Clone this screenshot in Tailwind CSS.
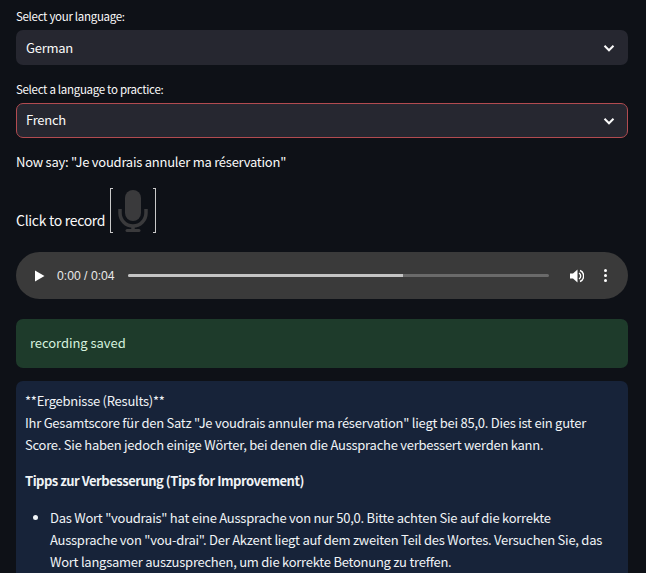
<!DOCTYPE html>
<html lang="en">
<head>
    <meta charset="UTF-8">
    <meta name="viewport" content="width=device-width, initial-scale=1.0">
    <title>Language Practice</title>
    <script src="https://cdn.jsdelivr.net/npm/@tailwindcss/browser@4"></script>
</head>
<body class="bg-[#0e1117] text-[#fafafa] font-['Noto_Sans_CJK_JP',sans-serif] text-[13px] tracking-[-0.25px] leading-[22px] h-[573px] overflow-hidden">
    <div class="pl-4 pr-[18px] pt-[7px]">
        <label class="block text-[11.5px] tracking-[-0.3px] leading-[18px] h-[23px]">Select your language:</label>
        <div class="h-[35px] rounded-[7px] bg-[#262730] flex items-center justify-between pl-[10px] pr-[12px]">
            <span>German</span>
            <svg class="w-[14px] h-[14px]" viewBox="0 0 14 14" fill="none" stroke="#fafafa" stroke-width="2"><path d="M2.500 4.800 7 9.300l4.500-4.500"/></svg>
        </div>

        <label class="block text-[11.5px] tracking-[-0.3px] leading-[18px] h-[23px] mt-[15px]">Select a language to practice:</label>
        <div class="h-[35px] rounded-[7px] bg-[#262730] border-[1.5px] border-[#b24b50] flex items-center justify-between pl-[9px] pr-[11px]">
            <span class="-mt-[2px]">French</span>
            <svg class="w-[14px] h-[14px]" viewBox="0 0 14 14" fill="none" stroke="#fafafa" stroke-width="2"><path d="M2.500 4.800 7 9.300l4.500-4.500"/></svg>
        </div>

        <p class="mt-[13px]">Now say: "Je voudrais annuler ma réservation"</p>

        <div class="flex items-end mt-[15px] h-[45px]">
            <span class="leading-[22px] mb-[2px] text-[14px] tracking-[-0.3px]">Click to record</span>
            <div class="ml-[5px] w-[46px] h-[45px] border-x border-[#c9c9c9] relative flex items-center justify-center">
                <span class="absolute left-0 top-0 w-[2px] h-[45px] border-y border-[#c9c9c9]"></span>
                <span class="absolute right-0 top-0 w-[2px] h-[45px] border-y border-[#c9c9c9]"></span>
                <svg class="w-[30px] h-[42px]" viewBox="0 0 30 42" fill="none">
                    <rect x="7" y="0" width="16" height="31" rx="8" fill="#3a3a3c"/>
                    <path d="M2 19v4a13 13 0 0 0 26 0V19" stroke="#3a3a3c" stroke-width="3.500"/>
                    <path d="M15 35v5" stroke="#3a3a3c" stroke-width="3.500"/>
                    <path d="M9 40.500h12" stroke="#3a3a3c" stroke-width="3" stroke-linecap="round"/>
                </svg>
            </div>
        </div>

        <div class="mt-[19px] h-[47px] rounded-full bg-[#3a3a3a] flex items-center pl-[18px] pr-[17px]">
            <svg class="w-[11px] h-[12px]" viewBox="0 0 11 12"><path d="M1 0.500 10.500 6 1 11.500z" fill="#fff"/></svg>
            <span class="ml-[12px] font-['Liberation_Sans',sans-serif] tracking-normal text-[12.2px] text-[#e8e8e8] whitespace-nowrap">0:00 / 0:04</span>
            <div class="ml-[13px] w-[421px] h-[3px] rounded-full bg-[#6a6a6a] overflow-hidden">
                <div class="h-full bg-[#c4c4c4]" style="width:65.5%"></div>
            </div>
            <svg class="ml-[21px] w-[14px] h-[14px]" viewBox="0 0 14 14" fill="none"><path d="M0 4.500h3L7.500 0.500v13L3 9.500H0z" fill="#fff"/><path d="M9 4a3.500 3.500 0 0 1 0 6" stroke="#fff" stroke-width="1.400"/><path d="M10 1.500a6 6 0 0 1 0 11" stroke="#fff" stroke-width="1.400"/></svg>
            <div class="ml-[20px] flex flex-col gap-[2px]">
                <span class="w-[3px] h-[3px] rounded-full bg-white"></span>
                <span class="w-[3px] h-[3px] rounded-full bg-white"></span>
                <span class="w-[3px] h-[3px] rounded-full bg-white"></span>
            </div>
        </div>

        <div class="mt-[20px] h-[49px] rounded-[7px] bg-[#1e3b2b] text-[#d5f0de] tracking-[-0.05px] flex items-center px-[14px]"><span class="-mt-[2px]">recording saved</span></div>

        <div class="mt-[13px] rounded-[7px] bg-[#172339] text-[#f0f3f6] px-[9px] pt-[9px] pb-4">
            <p>**Ergebnisse (Results)**<br>Ihr Gesamtscore für den Satz "Je voudrais annuler ma réservation" liegt bei 85,0. Dies ist ein guter Score. Sie haben jedoch einige Wörter, bei denen die Aussprache verbessert werden kann.</p>
            <p class="mt-[14px] font-semibold tracking-[-0.48px]">Tipps zur Verbesserung (Tips for Improvement)</p>
            <ul class="mt-[15px] list-disc pl-[25px] marker:text-[#f0f3f6]">
                <li>Das Wort "voudrais" hat eine Aussprache von nur 50,0. Bitte achten Sie auf die korrekte Aussprache von "vou-drai". Der Akzent liegt auf dem zweiten Teil des Wortes. Versuchen Sie, das Wort langsamer auszusprechen, um die korrekte Betonung zu treffen.</li>
            </ul>
        </div>
    </div>
</body>
</html>
